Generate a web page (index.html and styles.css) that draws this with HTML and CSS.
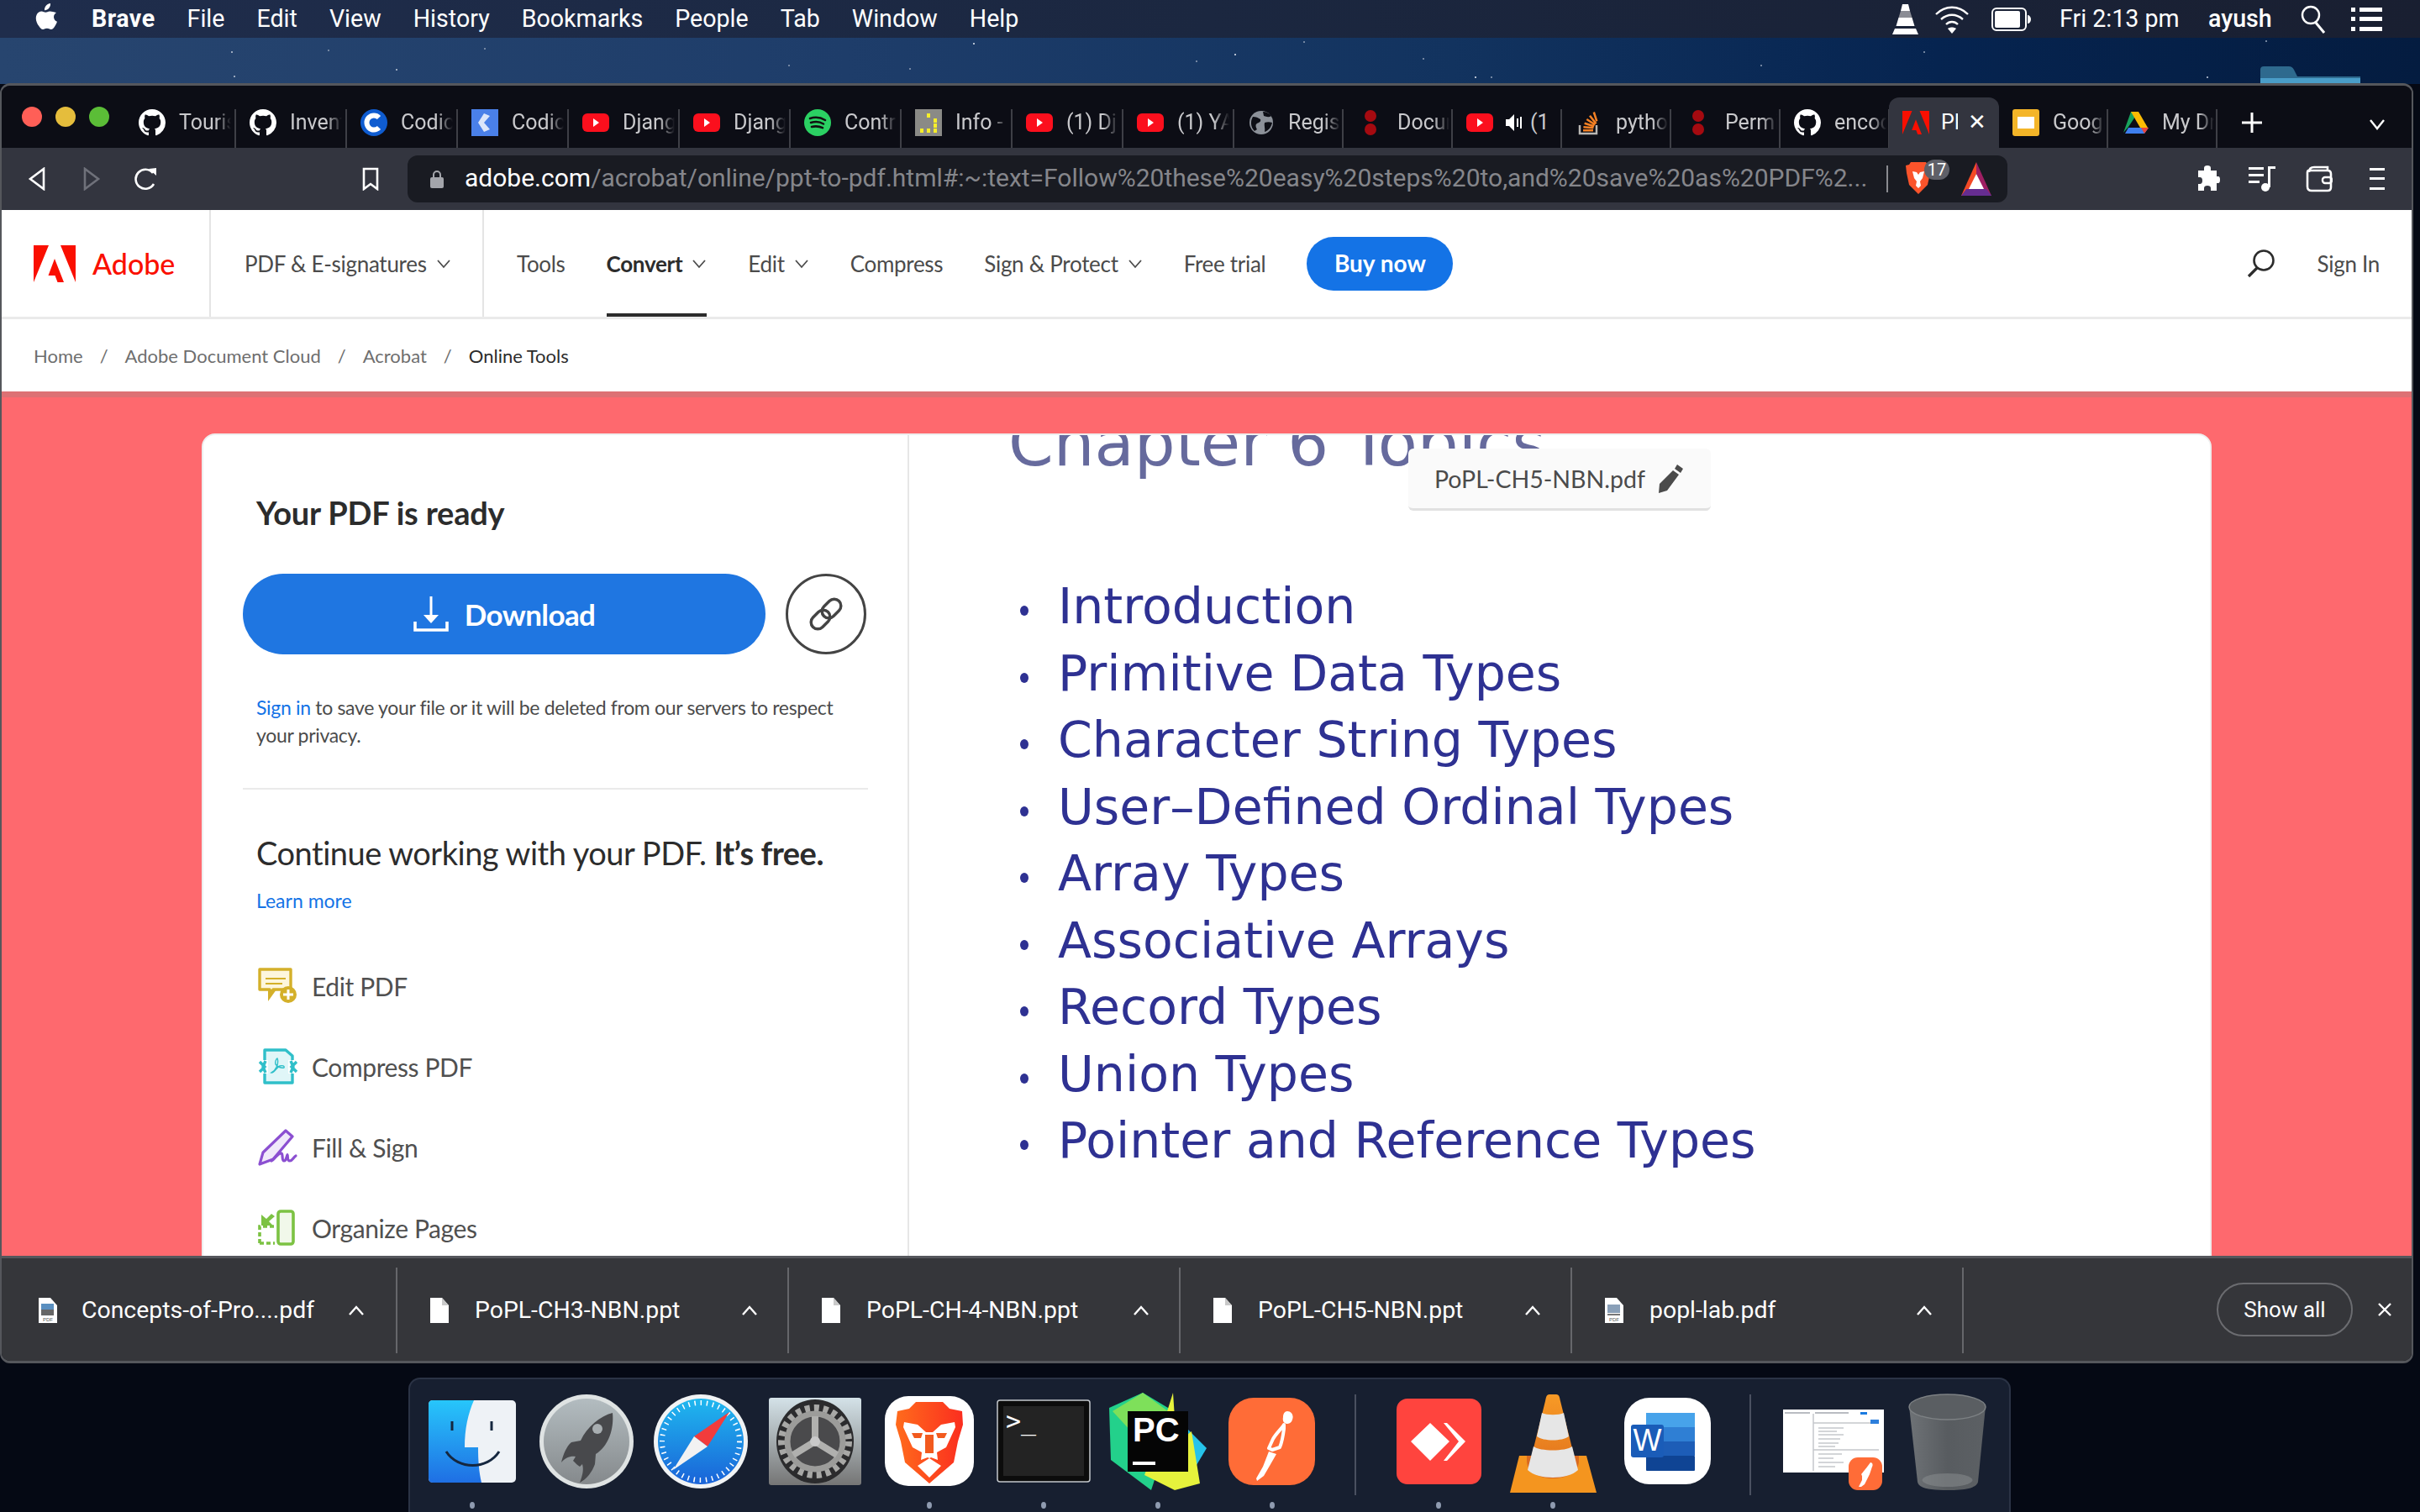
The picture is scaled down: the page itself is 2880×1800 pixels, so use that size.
FILE: index.html
```html
<!DOCTYPE html>
<html lang="en">
<head>
<meta charset="utf-8">
<title>Adobe Acrobat - PPT to PDF</title>
<link rel="stylesheet" href="styles.css">
</head>
<body>
<svg class="defs" width="0" height="0">
  <symbol id="gh" viewBox="0 0 16 16"><path fill="#fff" d="M8 0C3.58 0 0 3.58 0 8c0 3.54 2.29 6.53 5.47 7.59.4.07.55-.17.55-.38 0-.19-.01-.82-.01-1.49-2.01.37-2.53-.49-2.69-.94-.09-.23-.48-.94-.82-1.13-.28-.15-.68-.52-.01-.53.63-.01 1.08.58 1.23.82.72 1.21 1.87.87 2.33.66.07-.52.28-.87.51-1.07-1.78-.2-3.64-.89-3.64-3.95 0-.87.31-1.59.82-2.15-.08-.2-.36-1.02.08-2.12 0 0 .67-.21 2.2.82.64-.18 1.32-.27 2-.27.68 0 1.36.09 2 .27 1.53-1.04 2.2-.82 2.2-.82.44 1.1.16 1.92.08 2.12.51.56.82 1.27.82 2.15 0 3.07-1.87 3.75-3.65 3.95.29.25.54.73.54 1.48 0 1.07-.01 1.93-.01 2.2 0 .21.15.46.55.38A8.013 8.013 0 0016 8c0-4.42-3.58-8-8-8z"/></symbol>
  <symbol id="yt" viewBox="0 0 32 32"><rect y="5" width="32" height="22" rx="6" fill="#fb0f1d"/><path fill="#fff" d="M13 11l7 5-7 5z"/></symbol>
  <symbol id="dots" viewBox="0 0 32 32"><circle cx="16" cy="8" r="7" fill="#a50a10"/><circle cx="16" cy="24" r="7" fill="#a50a10"/></symbol>
  <symbol id="adobe" viewBox="0 0 50 44"><path fill="#fa0f00" d="M0 0h18L0 44zM32 0h18v44zM25 16l11 28h-7.500l-3-8H17.500z"/></symbol>
  <symbol id="doc" viewBox="0 0 24 30"><path fill="#fff" d="M1 0h14l8 9v21H1z"/><path fill="#c9c9c9" d="M15 0l8 9h-8z"/></symbol>
  <symbol id="chev" viewBox="0 0 18 12"><path fill="none" stroke="#4b4b4b" stroke-width="1.800" d="M2 2l7 8 7-8"/></symbol>
  <symbol id="up" viewBox="0 0 20 14"><path fill="none" stroke="#fff" stroke-width="2.400" d="M2 12l8-9 8 9"/></symbol>
</svg>

<header class="menubar">
  <svg class="apple" viewBox="0 0 26 32"><path fill="#fff" d="M18 0c.3 2.500-.7 4.500-2 6-1.400 1.500-3.200 2.400-5 2.200-.3-2.300.8-4.400 2-5.800C14.300 1 16.300.1 18 0zM25 11c-1.700 1.100-3 2.900-3 5.200 0 2.700 1.700 4.600 4 5.500-.6 1.900-1.500 3.800-2.700 5.500-1.400 2-2.700 3.800-4.600 3.800-1.900 0-2.500-1.200-4.800-1.200-2.300 0-3 1.200-4.700 1.200-2 .1-3.500-2-4.900-4C1.100 23.500-.5 17 1.900 12.900 3.100 10.800 5.200 9.500 7.500 9.500c1.900 0 3.600 1.300 4.800 1.300 1.200 0 3.100-1.500 5.300-1.300 1.900.1 4.700.6 7.400 1.500z"/></svg>
  <nav class="menus">
    <span class="menu-strong">Brave</span><span>File</span><span>Edit</span><span>View</span><span>History</span><span>Bookmarks</span><span>People</span><span>Tab</span><span>Window</span><span>Help</span>
  </nav>
  <div class="status">
    <svg class="st-vlc" viewBox="0 0 33 36"><path fill="#fff" d="M13 0h7l2 8H11zM8.500 16h16l3 10H5.500zM1 36l3-7h25l3 7z"/><path fill="#8a8c94" d="M11 8h11l2.500 8h-16z"/></svg>
    <svg class="st-wifi" viewBox="0 0 42 36"><g fill="none" stroke="#fff" stroke-width="2.400"><path d="M2 12c11-11 27-11 38 0"/><path d="M8 18c8-7 18-7 26 0"/><path d="M14 24c4-4 10-4 14 0"/></g><path fill="#fff" d="M21 35l-5-6c3-2 7-2 10 0z"/></svg>
    <svg class="st-bat" viewBox="0 0 47 28"><rect x="1" y="1" width="40" height="26" rx="5" fill="none" stroke="#fff" stroke-width="2"/><rect x="4" y="4" width="30" height="20" rx="2" fill="#fff"/><path fill="#fff" d="M43 9c2 0 4 2 4 5s-2 5-4 5z"/></svg>
    <span class="st-time">Fri 2:13 pm</span>
    <span class="st-user">ayush</span>
    <svg class="st-search" viewBox="0 0 30 34"><circle cx="12" cy="12" r="10" fill="none" stroke="#fff" stroke-width="2.400"/><path stroke="#fff" stroke-width="3" d="M18 21l10 12"/></svg>
    <svg class="st-list" viewBox="0 0 37 30"><path fill="#fff" d="M0 1h5v5H0zM10 1h27v5H10zM0 12h5v5H0zM10 12h27v5H10zM0 24h5v5H0zM10 24h27v5H10z"/></svg>
  </div>
</header>

<div class="desktop">
  <svg class="folder" viewBox="0 0 119 20"><path fill="#2e6a8e" d="M0 20V4q0-4 4-4h30q4 0 6 4l4 8h75v8z"/><path fill="#4a9dc8" d="M0 14h119v6H0z"/></svg>

  <main class="window">
    <div class="tabstrip">
      <div class="lights"><i class="l-r"></i><i class="l-y"></i><i class="l-g"></i></div>
      <div class="tabs">
        <div class="tab w132"><svg class="fav"><use href="#gh"/></svg><span class="tt">Tourism</span></div>
        <div class="tab w132"><svg class="fav"><use href="#gh"/></svg><span class="tt">Inventory</span></div>
        <div class="tab w132"><svg class="fav" viewBox="0 0 32 32"><circle cx="16" cy="16" r="16" fill="#0f5cd0"/><path fill="none" stroke="#fff" stroke-width="6" d="M22 10a8.500 8.500 0 100 12"/></svg><span class="tt">Codic</span></div>
        <div class="tab w132"><svg class="fav" viewBox="0 0 32 32"><rect width="32" height="32" fill="#4a80e8"/><path fill="#dce6fa" d="M15 5l7 3-7 8 7 8-7 3-7-11z"/></svg><span class="tt">Codic</span></div>
        <div class="tab w132"><svg class="fav"><use href="#yt"/></svg><span class="tt">Django</span></div>
        <div class="tab w132"><svg class="fav"><use href="#yt"/></svg><span class="tt">Django</span></div>
        <div class="tab w132"><svg class="fav" viewBox="0 0 32 32"><circle cx="16" cy="16" r="16" fill="#2bd163"/><g fill="none" stroke="#111" stroke-width="2.600" stroke-linecap="round"><path d="M7 11c6-2 13-1 18 2"/><path d="M8 16c5-1.500 11-1 15 1.500"/><path d="M9 21c4-1 9-.7 13 1.200"/></g></svg><span class="tt">Contract</span></div>
        <div class="tab w132"><svg class="fav" viewBox="0 0 32 32"><rect width="32" height="32" fill="#8a8a86"/><path fill="#f6ee2a" d="M14 5h4v5h-4zM22 11h4v5h-4zM22 17h4v5h-4zM6 23h4v5H6zM14 23h4v5h-4zM22 23h4v5h-4z"/></svg><span class="tt">Info - </span></div>
        <div class="tab w132"><svg class="fav"><use href="#yt"/></svg><span class="tt">(1) Django</span></div>
        <div class="tab w132"><svg class="fav"><use href="#yt"/></svg><span class="tt">(1) YAML</span></div>
        <div class="tab w130"><svg class="fav" viewBox="0 0 32 32"><circle cx="16" cy="16" r="14" fill="#8c9199"/><path fill="#0d0e15" d="M6 9c4 0 6 1 9 3 1 3-2 4-4 5s-2 4 0 7l-3 2C3 21 3 14 6 9zM18 3c4 0 8 2 10 5-3 2-6 1-9 0zM20 16c3-1 6-1 9 0-1 5-4 9-9 11 1-4-1-8 0-11z"/></svg><span class="tt">Register</span></div>
        <div class="tab w130"><svg class="fav"><use href="#dots"/></svg><span class="tt">Document</span></div>
        <div class="tab w130"><svg class="fav"><use href="#yt"/></svg><svg class="spk" viewBox="0 0 20 22"><path fill="#fff" d="M0 7h4l6-6v20l-6-6H0z"/><path fill="#fff" d="M13 6h2v10h-2zM17 4h2v14h-2z"/></svg><span class="tt tt-tight">(1) Music</span></div>
        <div class="tab w130"><svg class="fav" viewBox="0 0 32 32"><path fill="none" stroke="#b9b7b4" stroke-width="2.500" d="M5 19v10h20V19"/><path fill="#f48024" d="M9 24h12v2.500H9zM9.500 20l12 1-.2 2.500-12-1zM11 15.500l11.500 3.500-.7 2.400-11.500-3.500zM14 11l10 6.500-1.400 2.100-10-6.500zM18 7l7.500 9.500-2 1.500L16 8.600zM23 3l3.500 11-2.400.8L20.600 4z"/></svg><span class="tt">python</span></div>
        <div class="tab w130"><svg class="fav"><use href="#dots"/></svg><span class="tt">Permission</span></div>
        <div class="tab w130"><svg class="fav"><use href="#gh"/></svg><span class="tt">encode</span></div>
        <div class="tab tab-active"><svg class="fav"><use href="#adobe"/></svg><span class="tt tt-active">PPT</span><span class="tabx">✕</span></div>
        <div class="tab w130 tab-nosep"><svg class="fav" viewBox="0 0 32 32"><rect width="32" height="32" rx="3" fill="#f4b528"/><rect x="6" y="9" width="20" height="14" fill="#fff"/></svg><span class="tt">Google</span></div>
        <div class="tab w130"><svg class="fav" viewBox="0 0 32 32"><path fill="#18a35d" d="M11 3h9L8 21l-6 7z"/><path fill="#fbbc04" d="M20 3l11 19h-9L11 3z"/><path fill="#3e7fee" d="M8 22h24l-5 7H4z"/><path fill="#e8453c" d="M27 29l5-7h-9z"/></svg><span class="tt">My Drive</span></div>
      </div>
      <svg class="newtab" viewBox="0 0 24 24"><path fill="#fff" d="M10.500 0h3v10.500H24v3H13.500V24h-3V13.500H0v-3h10.500z"/></svg>
      <svg class="tabmenu" viewBox="0 0 20 14"><path fill="none" stroke="#fff" stroke-width="2.400" d="M2 2l8 10 8-10"/></svg>
    </div>

    <div class="toolbar">
      <svg class="tb-back" viewBox="0 0 22 28"><path fill="none" stroke="#fff" stroke-width="2.600" d="M19 2v24L3 14z"/></svg>
      <svg class="tb-fwd" viewBox="0 0 22 28"><path fill="none" stroke="#6f717a" stroke-width="2.600" d="M3 2v24l16-12z"/></svg>
      <svg class="tb-reload" viewBox="0 0 28 28"><path fill="none" stroke="#fff" stroke-width="2.600" d="M22 7A11.500 11.500 0 1023 20"/><path fill="#fff" d="M17 2l9-1v9z"/></svg>
      <svg class="tb-mark" viewBox="0 0 22 28"><path fill="none" stroke="#fff" stroke-width="2.600" d="M3 2h16v24l-8-6-8 6z"/></svg>
      <div class="urlbar">
        <svg class="lock" viewBox="0 0 16 22"><path fill="none" stroke="#a3a5ab" stroke-width="2" d="M4 9V6a4 4 0 018 0v3"/><rect y="9" width="16" height="13" rx="2" fill="#a3a5ab"/></svg>
        <span class="url"><b>adobe.com</b>/acrobat/online/ppt-to-pdf.html#:~:text=Follow%20these%20easy%20steps%20to,and%20save%20as%20PDF%2...</span>
        <i class="urlsep"></i>
        <div class="shield">
          <svg class="lion" viewBox="0 0 30 38"><path fill="#fb542b" d="M6 0h18l2 3 4 1-1 9-3 14-11 11L4 27 1 13 0 4l4-1z"/><path fill="#fff" d="M8 11l5 1 2 3 2-3 5-1-2 8-3 4 1 5-3 3-3-3 1-5-3-4z"/></svg>
          <span class="badge">17</span>
        </div>
        <svg class="bat" viewBox="0 0 36 40"><path fill="#f34a26" d="M18 0L0 40h8L18 14z"/><path fill="#9e1f63" d="M18 0l18 40h-8L18 14z"/><path fill="#fff" d="M18 14l10 20H8z"/><path fill="#662d91" d="M0 40l6-8h24l6 8z"/></svg>
      </div>
      <div class="tb-right">
        <svg class="tb-puzzle" viewBox="0 0 28 32"><path fill="#fff" d="M9 3q0-3 4-3t4 3v3h7v7h2q2 0 2 4t-2 4h-2v9H17v-3q0-3-4-3t-4 3v3H2v-8h2q3 0 3-4t-3-4H2V6h7z"/></svg>
        <svg class="tb-music" viewBox="0 0 32 30"><path fill="#fff" d="M0 1h18v3H0zM0 9h18v3H0zM0 17h13v3H0zM23 0h9v3h-6v22h-3z"/><circle cx="20" cy="25" r="5" fill="#fff"/></svg>
        <svg class="tb-wallet" viewBox="0 0 32 32"><path fill="none" stroke="#fff" stroke-width="2.600" d="M4 8q0-6 6-6h16v5M2 8q0-3 4-2h20q4 0 4 4v16q0 4-4 4H7q-5 0-5-5z"/><rect x="20" y="14" width="11" height="7" rx="3" fill="none" stroke="#fff" stroke-width="2.400"/></svg>
        <svg class="tb-ham" viewBox="0 0 18 26"><path fill="#fff" d="M0 0h18v3H0zM0 11h18v3H0zM0 23h18v3H0z"/></svg>
      </div>
    </div>

    <div class="page">
      <div class="sitenav">
        <div class="brand"><svg class="brand-logo"><use href="#adobe"/></svg><span>Adobe</span></div>
        <div class="product"><span>PDF &amp; E-signatures</span><svg class="chev"><use href="#chev"/></svg></div>
        <nav class="navlinks">
          <a class="nl">Tools</a>
          <a class="nl nl-active">Convert<svg class="chev"><use href="#chev"/></svg></a>
          <a class="nl">Edit<svg class="chev"><use href="#chev"/></svg></a>
          <a class="nl">Compress</a>
          <a class="nl">Sign &amp; Protect<svg class="chev"><use href="#chev"/></svg></a>
          <a class="nl">Free trial</a>
          <a class="buy">Buy now</a>
        </nav>
        <div class="nav-right">
          <svg class="nav-search" viewBox="0 0 36 36"><circle cx="21" cy="14" r="11.500" fill="none" stroke="#2c2c2c" stroke-width="2.600"/><path stroke="#2c2c2c" stroke-width="3.200" d="M13 23L3 33"/></svg>
          <a class="signin">Sign In</a>
        </div>
      </div>
      <div class="crumbs">
        <span>Home</span><i>/</i><span>Adobe Document Cloud</span><i>/</i><span>Acrobat</span><i>/</i><span class="crumb-now">Online Tools</span>
      </div>
      <div class="stage">
        <section class="card">
          <aside class="panel">
            <h1 class="ready">Your PDF is ready</h1>
            <div class="actions">
              <a class="dl"><svg class="dl-ico" viewBox="0 0 42 42"><path fill="#fff" d="M19.500 0h3v26h-3z"/><path fill="#fff" d="M12 22h18l-9 10z"/><path fill="none" stroke="#fff" stroke-width="3.600" d="M2 30v10h38V30"/></svg><span>Download</span></a>
              <a class="linkbtn"><svg viewBox="0 0 40 40"><g fill="none" stroke="#444" stroke-width="3" transform="rotate(-45 20 20)"><rect x="1" y="13" width="22" height="14" rx="7"/><rect x="17" y="13" width="22" height="14" rx="7"/></g></svg></a>
            </div>
            <p class="note"><a>Sign in</a> to save your file or it will be deleted from our servers to respect your privacy.</p>
            <hr class="rule">
            <h2 class="cont">Continue working with your PDF. <b>It’s free.</b></h2>
            <a class="learn">Learn more</a>
            <ul class="tools">
              <li><svg viewBox="0 0 48 44"><path fill="#fdf6dd" stroke="#d4b02a" stroke-width="3.400" stroke-linejoin="round" d="M2 2h37v24H18l-4 7v-7H2z"/><path stroke="#d4b02a" stroke-width="2" d="M9 13h24M9 19h20"/><path fill="#d4b02a" d="M12 26h10l-10 14z"/><circle cx="36" cy="32" r="10" fill="#d4b02a"/><path fill="#fff" d="M34.500 26h3v4.500H42v3h-4.500V38h-3v-4.500H30v-3h4.500z"/></svg><span>Edit PDF</span></li>
              <li><svg viewBox="0 0 48 44"><path fill="#e0f6f8" stroke="#2fbfc9" stroke-width="3.400" stroke-linejoin="round" d="M8 2h25l8 7v32H8z"/><path fill="#fff" d="M0 14h12v16H0zM36 14h12v16H36z"/><path fill="none" stroke="#2fbfc9" stroke-width="3.400" d="M2 16l6 6-6 6M46 16l-6 6 6 6M9 15l-3 7 3 7M39 15l3 7-3 7"/><path fill="none" stroke="#2fbfc9" stroke-width="1.400" d="M23 12c2 5-1 14-7 17 3 1 6-6 10-8 3-1 6 0 5 2-3 1-8-1-10-4-1-3 1-7 2-7z"/></svg><span>Compress PDF</span></li>
              <li><svg viewBox="0 0 48 44"><path fill="#f0e9fa" stroke="#8b4fd1" stroke-width="3.200" stroke-linejoin="round" d="M33 2l8 7-23 27-16 6 4-14z"/><path fill="none" stroke="#8b4fd1" stroke-width="3.200" stroke-linecap="round" d="M16 38c3-1 8-10 12-9 2 1 0 9 3 9 3 0 3-6 4-7 1 1-1 7 3 7 3 0 4-4 7-6"/></svg><span>Fill &amp; Sign</span></li>
              <li><svg viewBox="0 0 48 44"><rect x="24" y="2" width="18" height="39" rx="3" fill="#f1f8ea" stroke="#7cc243" stroke-width="3.600"/><path fill="#7cc243" d="M4 6v13h14l-5-5 7-6-4-3-6 6z"/><path fill="none" stroke="#7cc243" stroke-width="3.600" stroke-dasharray="5 3" d="M2 40V20h18M2 40h18"/></svg><span>Organize Pages</span></li>
            </ul>
          </aside>
          <article class="preview">
            <h3 class="ptitle">Chapter 6 Topics</h3>
            <div class="chip"><span>PoPL-CH5-NBN.pdf</span><svg viewBox="0 0 32 34"><path fill="#4b4b4b" d="M24 0l7 5-3 5-7-5zM19 7l7 5-14 19-10 3 1-11z"/></svg></div>
            <ul class="plist">
              <li>Introduction</li>
              <li>Primitive Data Types</li>
              <li>Character String Types</li>
              <li>User–Defined Ordinal Types</li>
              <li>Array Types</li>
              <li>Associative Arrays</li>
              <li>Record Types</li>
              <li>Union Types</li>
              <li>Pointer and Reference Types</li>
            </ul>
          </article>
        </section>
      </div>
    </div>

    <footer class="downloads">
      <div class="dlitem dl-first"><svg class="dl-doc" viewBox="0 0 24 30"><path fill="#fff" d="M1 0h14l8 9v21H1z"/><rect x="4" y="7" width="15" height="9" fill="#5a8fc0"/><rect x="4" y="14" width="15" height="7" fill="#666"/><text x="12" y="28" font-size="6" text-anchor="middle" fill="#555" class="svgtext">PDF</text></svg><span>Concepts-of-Pro....pdf</span><svg class="dl-up"><use href="#up"/></svg></div>
      <div class="dlitem"><svg class="dl-doc"><use href="#doc"/></svg><span>PoPL-CH3-NBN.ppt</span><svg class="dl-up"><use href="#up"/></svg></div>
      <div class="dlitem"><svg class="dl-doc"><use href="#doc"/></svg><span>PoPL-CH-4-NBN.ppt</span><svg class="dl-up"><use href="#up"/></svg></div>
      <div class="dlitem"><svg class="dl-doc"><use href="#doc"/></svg><span>PoPL-CH5-NBN.ppt</span><svg class="dl-up"><use href="#up"/></svg></div>
      <div class="dlitem"><svg class="dl-doc" viewBox="0 0 24 30"><path fill="#fff" d="M1 0h14l8 9v21H1z"/><rect x="4" y="8" width="15" height="10" fill="#8aa0b8"/><rect x="4" y="19" width="15" height="2" fill="#777"/><text x="12" y="28" font-size="6" text-anchor="middle" fill="#555" class="svgtext">PDF</text></svg><span>popl-lab.pdf</span><svg class="dl-up"><use href="#up"/></svg></div>
      <div class="dl-right">
        <a class="showall">Show all</a>
        <svg class="dl-close" viewBox="0 0 18 18"><path stroke="#fff" stroke-width="2.400" d="M2 2l14 14M16 2L2 16"/></svg>
      </div>
    </footer>
  </main>

  <div class="dock">
    <div class="slot"><svg viewBox="0 0 136 120"><defs><linearGradient id="fb" x1="0" y1="0" x2="0" y2="1"><stop offset="0" stop-color="#27c6fb"/><stop offset="1" stop-color="#1f6fe4"/></linearGradient></defs><rect x="16" y="11" width="104" height="98" rx="5" fill="#eef2f6"/><path fill="url(#fb)" d="M21 11h49c-7 16-11 34-11 56h16c0 16 1 29 4 42H21q-5 0-5-5V16q0-5 5-5z"/><path stroke="#15273f" stroke-width="3" d="M44 36v11M91 36v11"/><path fill="none" stroke="#15273f" stroke-width="3" d="M37 72c14 22 49 22 63 0"/></svg><i class="dot"></i></div>
    <div class="slot"><svg viewBox="0 0 136 120"><defs><linearGradient id="lp" x1="0" y1="0" x2="0" y2="1"><stop offset="0" stop-color="#b3bcc0"/><stop offset="1" stop-color="#85898c"/></linearGradient></defs><circle cx="68" cy="60" r="56" fill="#dfe3e3"/><circle cx="68" cy="60" r="51" fill="url(#lp)"/><path fill="#48494c" d="M99 26c-15 4-30 16-38 33l-11 2c-6 5-10 15-12 24 5-6 11-8 17-7l-3 5c3 3 5 5 8 7l3-3c2 7 0 14-3 22 8-4 15-13 18-22l1-12c15-9 22-30 20-49z"/><circle cx="81" cy="45" r="6" fill="#a8aeb1"/></svg></div>
    <div class="slot"><svg viewBox="0 0 136 120"><defs><linearGradient id="sf" x1="0" y1="0" x2="0" y2="1"><stop offset="0" stop-color="#1fb8ef"/><stop offset="1" stop-color="#1a63d8"/></linearGradient></defs><circle cx="68" cy="60" r="56" fill="#f1f3f4"/><circle cx="68" cy="60" r="51" fill="url(#sf)"/><circle cx="68" cy="60" r="46" fill="none" stroke="#fff" stroke-width="6" stroke-dasharray="1.500 5.700"/><path fill="#f23c3c" d="M102 25L76 66 60 54z"/><path fill="#f2f2f2" d="M35 94l25-40 16 12z"/></svg></div>
    <div class="slot"><svg viewBox="0 0 136 120"><defs><linearGradient id="sp" x1="0" y1="0" x2="0" y2="1"><stop offset="0" stop-color="#d4e2e8"/><stop offset="1" stop-color="#757575"/></linearGradient></defs><rect x="13" y="8" width="110" height="104" rx="3" fill="url(#sp)"/><ellipse cx="68" cy="60" rx="46" ry="50" fill="#2b2b2d"/><circle cx="68" cy="60" r="40" fill="none" stroke="#a8a8a6" stroke-width="8" stroke-dasharray="6 5"/><circle cx="68" cy="60" r="33" fill="#4a4a4c" stroke="#9c9c9a" stroke-width="7"/><path stroke="#b0b0ae" stroke-width="8" d="M68 60V30M68 60L42 76M68 60l26 16"/><circle cx="68" cy="60" r="6" fill="#c9c9c9"/></svg></div>
    <div class="slot"><svg viewBox="0 0 136 120"><defs><linearGradient id="br" x1="0" y1="0" x2="1" y2="0"><stop offset="0" stop-color="#ff6b1c"/><stop offset="1" stop-color="#fb2e1f"/></linearGradient></defs><rect x="15" y="6" width="106" height="107" rx="28" fill="#fff"/><path fill="url(#br)" d="M52 13h32l8 8 15 3 1 16-6 20-5 25-29 25-29-25-5-25-6-20 2-16 14-3z"/><path fill="#fff" d="M38 37l16 3 10 9h8l10-9 16-3 1 6-11 24-11 6 1 9-8-3-2 1-2-1-8 3 1-9-11-6-11-24z"/><path fill="#f25a1e" d="M63 52v22h10V52zM47 50h13l-2 6H50zM89 50H76l2 6h8z"/><path fill="#fff" d="M54 89l14-9 14 9-14 14z"/></svg><i class="dot"></i></div>
    <div class="slot"><svg viewBox="0 0 136 120"><rect x="13" y="11" width="110" height="97" rx="3" fill="#0c0c0c" stroke="#c4c8cc" stroke-width="1.500"/><rect x="20" y="18" width="96" height="83" fill="#232323"/><text x="23" y="46" class="svgmono">&gt;_</text></svg><i class="dot"></i></div>
    <div class="slot"><svg viewBox="0 0 136 120"><path fill="#23d18b" d="M10 20L50 2l40 24-30 92-48-36z"/><path fill="#7ee05a" d="M50 2l30 22-20 50-46-50z"/><path fill="#26c3ea" d="M80 22l46 46-24 40z"/><path fill="#e6f23c" d="M74 40l12-38 4 60 18-14 10 62-30 8-36-18z"/><rect x="32" y="24" width="72" height="72" fill="#050505"/><text x="38" y="60" class="svgpc">PC</text><rect x="38" y="84" width="27" height="4" fill="#fff"/></svg><i class="dot"></i></div>
    <div class="slot"><svg viewBox="0 0 136 120"><rect x="16" y="8" width="103" height="104" rx="30" fill="#ff6c37"/><path fill="none" stroke="#fff" stroke-width="4" stroke-linejoin="round" d="M82 40c-3 5-9 10-13 17l-5 11 4 2 9-3c3-7 4-14 5-22z"/><path fill="#fff" d="M86 24c5 0 8 5 6 10-1 4-4 5-7 5-3-1-5-3-4-8 0-4 2-7 5-7zM64 72l9 3-8 14-7 12-8 6-1-3 8-14z"/></svg><i class="dot"></i></div>
    <div class="docksep"></div>
    <div class="slot"><svg viewBox="0 0 136 120"><rect x="18" y="9" width="101" height="102" rx="13" fill="#ff443e"/><path fill="#fff" d="M58 38l23 22-23 23-23-23zM74 38h4l22 22-22 23h-4l18-23z"/></svg><i class="dot"></i></div>
    <div class="slot"><svg viewBox="0 0 136 120"><defs><linearGradient id="vc" x1="0" y1="0" x2="0" y2="1"><stop offset="0" stop-color="#f79a26"/><stop offset="1" stop-color="#e06f1c"/></linearGradient></defs><path fill="#f4951f" d="M28 77h80l12 44H17z"/><path fill="#d96a20" d="M37 83c0 28 62 28 62 0v-6H37z"/><path fill="url(#vc)" d="M64 4h8c4 0 4 4 5 8l20 80c-10 14-48 14-58 0L59 12c1-4 1-8 5-8z"/><path fill="#e6e6e6" d="M55 26c6 3 20 3 26 0l6 28c-8 6-30 6-38 0z"/><path fill="#e6e6e6" d="M45 66c8 6 38 6 46 0l7 28c-12 12-48 12-60 0z"/></svg><i class="dot"></i></div>
    <div class="slot"><svg viewBox="0 0 136 120"><rect x="17" y="8" width="103" height="103" rx="30" fill="#fff"/><rect x="43" y="26" width="58" height="18" fill="#47a3ea"/><rect x="43" y="43" width="58" height="17" fill="#2f7fd4"/><rect x="43" y="60" width="58" height="17" fill="#1d5db7"/><rect x="43" y="77" width="58" height="18" rx="1" fill="#0f4494"/><rect x="25" y="40" width="39" height="39" rx="3" fill="#1a5cb8"/><text x="44.500" y="71" class="svgw">W</text></svg></div>
    <div class="docksep"></div>
    <div class="slot"><svg viewBox="0 0 136 120"><rect x="8" y="22" width="120" height="75" fill="#fff"/><g fill="#b9bcc2"><rect x="10" y="25" width="30" height="2"/><rect x="46" y="25" width="40" height="2"/><rect x="100" y="25" width="8" height="3" fill="#1b7be0"/></g><g stroke="#c5c7cc" stroke-width="1.500"><path d="M44 27v68M44 38h78M44 70h78"/><path d="M50 44h30M50 48h22M50 52h30M50 57h26M50 62h24M50 66h20M50 75h28M50 80h18M50 85h30M50 90h20"/></g><path fill="#2d7fdc" d="M112 34h10v5h-10z"/><rect x="86" y="79" width="40" height="39" rx="11" fill="#ff6c37"/><path fill="#fff" d="M112 85c3 0 3 4 2 5l-3 9-6 12-4 3h-3l4-8 0-5c-1-1-1-3 0-3 2-3 5-6 7-9z"/></svg></div>
    <div class="slot"><svg viewBox="0 0 136 120"><defs><linearGradient id="tr" x1="0" y1="0" x2="1" y2="0"><stop offset="0" stop-color="#6e7276"/><stop offset=".5" stop-color="#585c60"/><stop offset="1" stop-color="#5c6064"/></linearGradient></defs><path fill="url(#tr)" d="M22 18l10 90c1 8 16 10 36 10s34-2 36-10l9-90z"/><ellipse cx="67.500" cy="19" rx="45.500" ry="15" fill="#5a5e62" stroke="#7d8184" stroke-width="1.500"/><ellipse cx="67.500" cy="106" rx="30" ry="8" fill="#8b8f92" opacity=".5"/></svg></div>
  </div>
</div>
</body>
</html>
```

FILE: styles.css
```css
* { box-sizing: border-box; }
html, body { margin: 0; height: 100%; }
body {
  width: 2880px; height: 1800px; overflow: hidden;
  font-family: "Lato", "Noto Sans", sans-serif;
  background-color: #050914;
  background-image:
    radial-gradient(circle at 276px 62px, #aab6c9 .6px, transparent 1.500px),
    radial-gradient(circle at 577px 58px, #7f90aa .6px, transparent 1.500px),
    radial-gradient(circle at 472px 83px, #aab6c9 .6px, transparent 1.500px),
    radial-gradient(circle at 279px 91px, #aab6c9 .6px, transparent 1.500px),
    radial-gradient(circle at 391px 60px, #7f90aa .6px, transparent 1.500px),
    radial-gradient(circle at 939px 78px, #7f90aa .6px, transparent 1.500px),
    radial-gradient(circle at 1159px 52px, #c9d2df .6px, transparent 1.500px),
    radial-gradient(circle at 1470px 65px, #c9d2df .6px, transparent 1.500px),
    radial-gradient(circle at 1552px 50px, #7f90aa .6px, transparent 1.500px),
    radial-gradient(circle at 1424px 73px, #7f90aa .6px, transparent 1.500px),
    radial-gradient(circle at 1694px 70px, #7f90aa .6px, transparent 1.500px),
    radial-gradient(circle at 1756px 92px, #c9d2df .6px, transparent 1.500px),
    radial-gradient(circle at 1775px 92px, #7f90aa .6px, transparent 1.500px),
    radial-gradient(circle at 1083px 82px, #7f90aa .6px, transparent 1.500px),
    radial-gradient(circle at 2697px 49px, #7f90aa .6px, transparent 1.500px),
    radial-gradient(circle at 2627px 92px, #aab6c9 .6px, transparent 1.500px),
    radial-gradient(circle at 2290px 62px, #7f90aa .6px, transparent 1.500px),
    radial-gradient(circle at 2096px 78px, #7f90aa .6px, transparent 1.500px),
    linear-gradient(90deg, #27456f 0%, #1e3d6a 35%, #12335f 60%, #062450 80%, #041c40 100%);
  background-repeat: no-repeat;
  background-size: 100% 100px;
}
.defs { position: absolute; }
svg { display: block; flex: none; }

/* menu bar */
.menubar {
  height: 45px; display: flex; align-items: center;
  padding-left: 42px; color: #fff;
  background: linear-gradient(90deg, #1f2d4c, #1b2740 50%, #191f31);
  font-family: "Roboto", sans-serif; font-size: 28.600px; line-height: 45px;
}
.apple { width: 26px; height: 32px; margin-top: -6px; }
.menus { display: flex; gap: 38px; margin-left: 41px; }
.menu-strong { font-weight: 700; letter-spacing: .5px; }
.status { margin-left: auto; display: flex; align-items: center; }
.st-vlc { width: 33px; height: 36px; }
.st-wifi { width: 42px; height: 36px; margin-left: 18px; }
.st-bat { width: 47px; height: 28px; margin-left: 26px; }
.st-time { margin-left: 34px; width: 143px; white-space: nowrap; }
.st-user { margin-left: 34px; width: 78px; font-weight: 500; }
.st-search { width: 30px; height: 34px; margin-left: 32px; }
.st-list { width: 37px; height: 30px; margin-left: 30px; margin-right: 45px; }

/* desktop */
.desktop { position: relative; height: 1755px; padding-top: 54px; }
.folder { position: absolute; left: 2690px; top: 34px; width: 119px; height: 20px; }

/* browser window */
.window {
  position: relative; width: 2872px; height: 1524px;
  display: flex; flex-direction: column; overflow: hidden;
  border-radius: 12px;
  border: 2px solid #55575c; border-top-width: 3px; border-bottom-width: 3px;
  background: #0c0d15;
}
.tabstrip { height: 74px; display: flex; background: #0c0d15; color: #c9c9cc; flex: none; }
.lights { width: 147px; display: flex; gap: 16px; padding: 25px 0 0 24px; }
.lights i { width: 24px; height: 24px; border-radius: 50%; display: block; }
.l-r { background: #ff5f57; } .l-y { background: #e5bd3c; } .l-g { background: #5bbd37; }
.tabs { display: flex; align-items: flex-end; height: 74px; }
.tab {
  height: 60px; display: flex; align-items: flex-start;
  padding: 14px 0 0 16px; position: relative; flex: none;
}
.tab::after {
  content: ""; position: absolute; right: 0; bottom: 0; width: 2px; height: 46px; background: #3e3f46;
}
.w132 { width: 132px; }
.w130 { width: 130px; }
.fav { width: 32px; height: 32px; }
.tt {
  margin-left: 16px; margin-top: 1px; font-family: "Roboto", sans-serif; font-size: 25px; line-height: 30px;
  white-space: nowrap; width: 62px; overflow: hidden;
  -webkit-mask-image: linear-gradient(90deg, #000 70%, transparent);
  mask-image: linear-gradient(90deg, #000 70%, transparent);
}
.tt-tight { margin-left: 9px; width: 20px; -webkit-mask-image: none; mask-image: none; }
.spk { width: 20px; height: 22px; margin: 5px 0 0 15px; }
.tab-active {
  width: 131px; background: #33353f; border-radius: 12px 12px 0 0; color: #fff; margin-left: -1px;
}
.tab-active::after { display: none; }
.tt-active { margin-left: 14px; width: 20px; -webkit-mask-image: none; mask-image: none; }
.tabx { margin-left: 12px; font-size: 26px; line-height: 30px; color: #fff; font-family: "DejaVu Sans", sans-serif; }
.tab-nosep { margin-left: 0; }
.newtab { width: 24px; height: 24px; margin: 32px 0 0 29px; }
.tabmenu { width: 20px; height: 14px; margin: 39px 0 0 127px; }

.toolbar {
  height: 74px; flex: none; background: #33353f; display: flex; align-items: center; position: relative;
}
.tb-back { width: 22px; height: 28px; margin-left: 31px; }
.tb-fwd { width: 22px; height: 28px; margin-left: 43px; }
.tb-reload { width: 28px; height: 28px; margin-left: 40px; }
.tb-mark { width: 22px; height: 28px; margin-left: 242px; }
.urlbar {
  margin-left: 33px; width: 1904px; height: 56px; border-radius: 12px;
  background: #191b22; display: flex; align-items: center; padding-left: 27px;
}
.lock { width: 16px; height: 22px; }
.url {
  margin-left: 25px; width: 1674px; white-space: nowrap; overflow: hidden; line-height: 40px; margin-top: -2px;
  font-family: "Roboto", sans-serif; font-size: 30px; color: #85868b;
}
.url b { color: #fff; font-weight: 400; }
.urlsep { width: 2px; height: 32px; background: #8a8b90; margin-left: 18px; }
.shield { position: relative; width: 62px; margin-left: 21px; height: 40px; }
.lion { width: 30px; height: 38px; }
.badge {
  position: absolute; left: 22px; top: -3px; width: 30px; height: 24px; border-radius: 12px;
  background: #5f6068; color: #fff; font: 20px/24px "Roboto", sans-serif; text-align: center;
}
.bat { width: 36px; height: 40px; margin-left: 4px; }
.tb-right { display: flex; align-items: center; margin-left: 225px; }
.tb-puzzle { width: 28px; height: 32px; }
.tb-music { width: 32px; height: 30px; margin-left: 34px; }
.tb-wallet { width: 32px; height: 32px; margin-left: 36px; }
.tb-ham { width: 18px; height: 26px; margin-left: 44px; }

/* page */
.page { flex: 1; min-height: 0; display: flex; flex-direction: column; background: #fff; overflow: hidden; }
.sitenav {
  height: 130px; flex: none; display: flex; align-items: stretch; border-bottom: 3px solid #eaeaea;
  color: #4b4b4b; font-size: 26px; letter-spacing: -.3px;
}
.brand {
  width: 249px; display: flex; align-items: center; padding: 0 0 0 38px; gap: 20px;
  border-right: 2px solid #e4e4e4; color: #fa0f00; font-size: 34px; font-weight: 500; letter-spacing: 0;
}
.brand-logo { width: 50px; height: 44px; }
.product {
  width: 325px; display: flex; align-items: center; padding-left: 40px;
  border-right: 2px solid #e4e4e4; white-space: nowrap;
}
.chev { width: 18px; height: 12px; margin-left: 11px; }
.navlinks { display: flex; align-items: center; padding-left: 39px; gap: 49px; }
.nl { display: flex; align-items: center; height: 100%; position: relative; white-space: nowrap; }
.nl-active { font-weight: 700; color: #2c2c2c; }
.nl-active::after {
  content: ""; position: absolute; left: 0; right: 0; bottom: 0; height: 4px; background: #2c2c2c;
}
.buy {
  width: 174px; height: 64px; border-radius: 32px; background: #1473e6; color: #fff;
  font-weight: 700; text-align: center; line-height: 62px; font-size: 28px; letter-spacing: 0;
}
.nav-right { margin-left: auto; display: flex; align-items: center; padding-right: 38px; }
.nav-search { width: 36px; height: 36px; margin-left: 2px; }
.signin { margin-left: 49px; }
.crumbs {
  height: 86px; flex: none; display: flex; align-items: center; padding-left: 38px;
  font-size: 22px; color: #6e6e6e;
}
.crumbs i { font-style: normal; margin: 0 20px; }
.crumb-now { color: #2c2c2c; }
.stage {
  flex: 1; min-height: 0; background: #fe696e; padding: 43px 238px 0 238px; overflow: hidden;
  border-top: 7px solid #dd7174;
}
.card {
  height: 1100px; background: #fff; border-radius: 16px 16px 0 0; display: flex;
  border: 2px solid #eee;
}
.panel { width: 840px; flex: none; border-right: 2px solid #e6e6e6; padding: 0 47px; color: #2c2c2c; }
.ready { margin: 69px 0 0 16px; font-size: 38px; line-height: 46px; font-weight: 700; letter-spacing: -.2px; }
.actions { display: flex; gap: 24px; margin-top: 50px; }
.dl {
  width: 622px; height: 96px; border-radius: 48px; background: #1f76e1; color: #fff;
  display: flex; align-items: center; justify-content: center; gap: 19px; font-size: 35px; font-weight: 700; letter-spacing: -.6px;
}
.dl-ico { width: 42px; height: 42px; }
.linkbtn {
  width: 96px; height: 96px; border-radius: 50%; border: 3px solid #444; display: flex;
  align-items: center; justify-content: center;
}
.linkbtn svg { width: 46px; height: 46px; }
.note { margin: 47px 0 0 16px; font-size: 23px; line-height: 33px; color: #4b4b4b; width: 720px; letter-spacing: -.32px; }
.note a, .learn { color: #1473e6; }
.rule { margin: 46px 0 0; border: 0; border-top: 2px solid #eaeaea; }
.cont { margin: 50px 0 0 16px; font-size: 38px; line-height: 50px; font-weight: 400; white-space: nowrap; color: #2c2c2c; letter-spacing: -.49px; }
.learn { display: block; margin: 17px 0 0 16px; font-size: 23px; line-height: 30px; }
.tools { list-style: none; margin: 39px 0 0 18px; padding: 0; }
.tools li { height: 96px; display: flex; align-items: center; gap: 16px; font-size: 30px; color: #505050; letter-spacing: -.4px; }
.tools svg { width: 48px; height: 44px; }

.preview { flex: 1; position: relative; overflow: hidden; font-family: "DejaVu Sans", sans-serif; }
.ptitle {
  margin: -35px 0 0 118px; font-size: 77px; line-height: 90px; font-weight: 400; color: #666a9d; white-space: nowrap;
}
.chip {
  position: absolute; left: 594px; top: 16px; width: 360px; height: 74px; background: #fafafa;
  border-bottom: 3px solid #e1e1e1; border-radius: 6px; display: flex; align-items: center; gap: 14px;
  padding-left: 31px; font-family: "Lato", sans-serif; font-size: 28.500px; color: #4b4b4b;
}
.chip svg { width: 32px; height: 34px; }
.plist { list-style: none; margin: 110px 0 0 177px; padding: 0; color: #2e3192; font-size: 58.500px; line-height: 79.500px; }
.plist li { position: relative; white-space: nowrap; }
.plist li::before {
  content: ""; position: absolute; left: -45px; top: 38px; width: 10px; height: 12px; border-radius: 50%; background: #2e3192;
}

/* downloads shelf */
.downloads {
  height: 125px; flex: none; background: #35363a; border-top: 3px solid #55575c; display: flex; align-items: stretch;
  color: #fff; font-family: "Roboto", sans-serif; font-size: 28.400px;
}
.dlitem { width: 466px; height: 102px; margin-top: 11px; display: flex; align-items: center; padding-left: 38px; position: relative; flex: none; }
.dlitem.dl-first { width: 471px; padding-left: 43px; }
.dlitem::after { content: ""; position: absolute; right: 0; top: 0; width: 2px; height: 102px; background: #66676b; }
.dl-doc { width: 24px; height: 30px; }
.dlitem span { margin-left: 30px; width: 293px; white-space: nowrap; overflow: hidden; line-height: 34px; }
.dlitem.dl-first span { margin-left: 28px; }
.dl-up { width: 20px; height: 14px; margin-left: 24px; }
.dl-right { margin-left: auto; display: flex; align-items: center; padding-right: 23px; }
.showall {
  width: 162px; height: 64px; border: 2px solid #6b6c70; border-radius: 32px; text-align: center; line-height: 60px; font-size: 26px;
}
.dl-close { width: 18px; height: 18px; margin-left: 29px; }

/* dock */
.dock {
  position: absolute; left: 486px; top: 1595px; width: 1907px; height: 170px;
  background: #171f30; border: 2px solid #2b3345; border-bottom: 0; border-radius: 14px 14px 0 0;
  display: flex; padding: 14px 0 0 6px; align-items: flex-start;
}
.slot { width: 136px; flex: none; display: flex; flex-direction: column; align-items: center; }
.slot svg { width: 136px; height: 120px; overflow: visible; }
.dot { display: block; width: 6px; height: 8px; border-radius: 50%; background: #8f9bb0; margin-top: 12px; }
.docksep { width: 62px; flex: none; display: flex; justify-content: center; padding-top: 4px; position: relative; }
.docksep::after { content: ""; display: block; width: 2px; height: 120px; background: #4a5060; }
.svgmono { font-family: "DejaVu Sans Mono", monospace; font-size: 30px; fill: #fff; }
.svgpc { font-family: "Liberation Sans", sans-serif; font-weight: 700; font-size: 40px; fill: #fff; }
.svgw { font-family: "Liberation Sans", sans-serif; font-size: 36px; fill: #fff; text-anchor: middle; }
.svgtext { font-family: "Liberation Sans", sans-serif; }
```
